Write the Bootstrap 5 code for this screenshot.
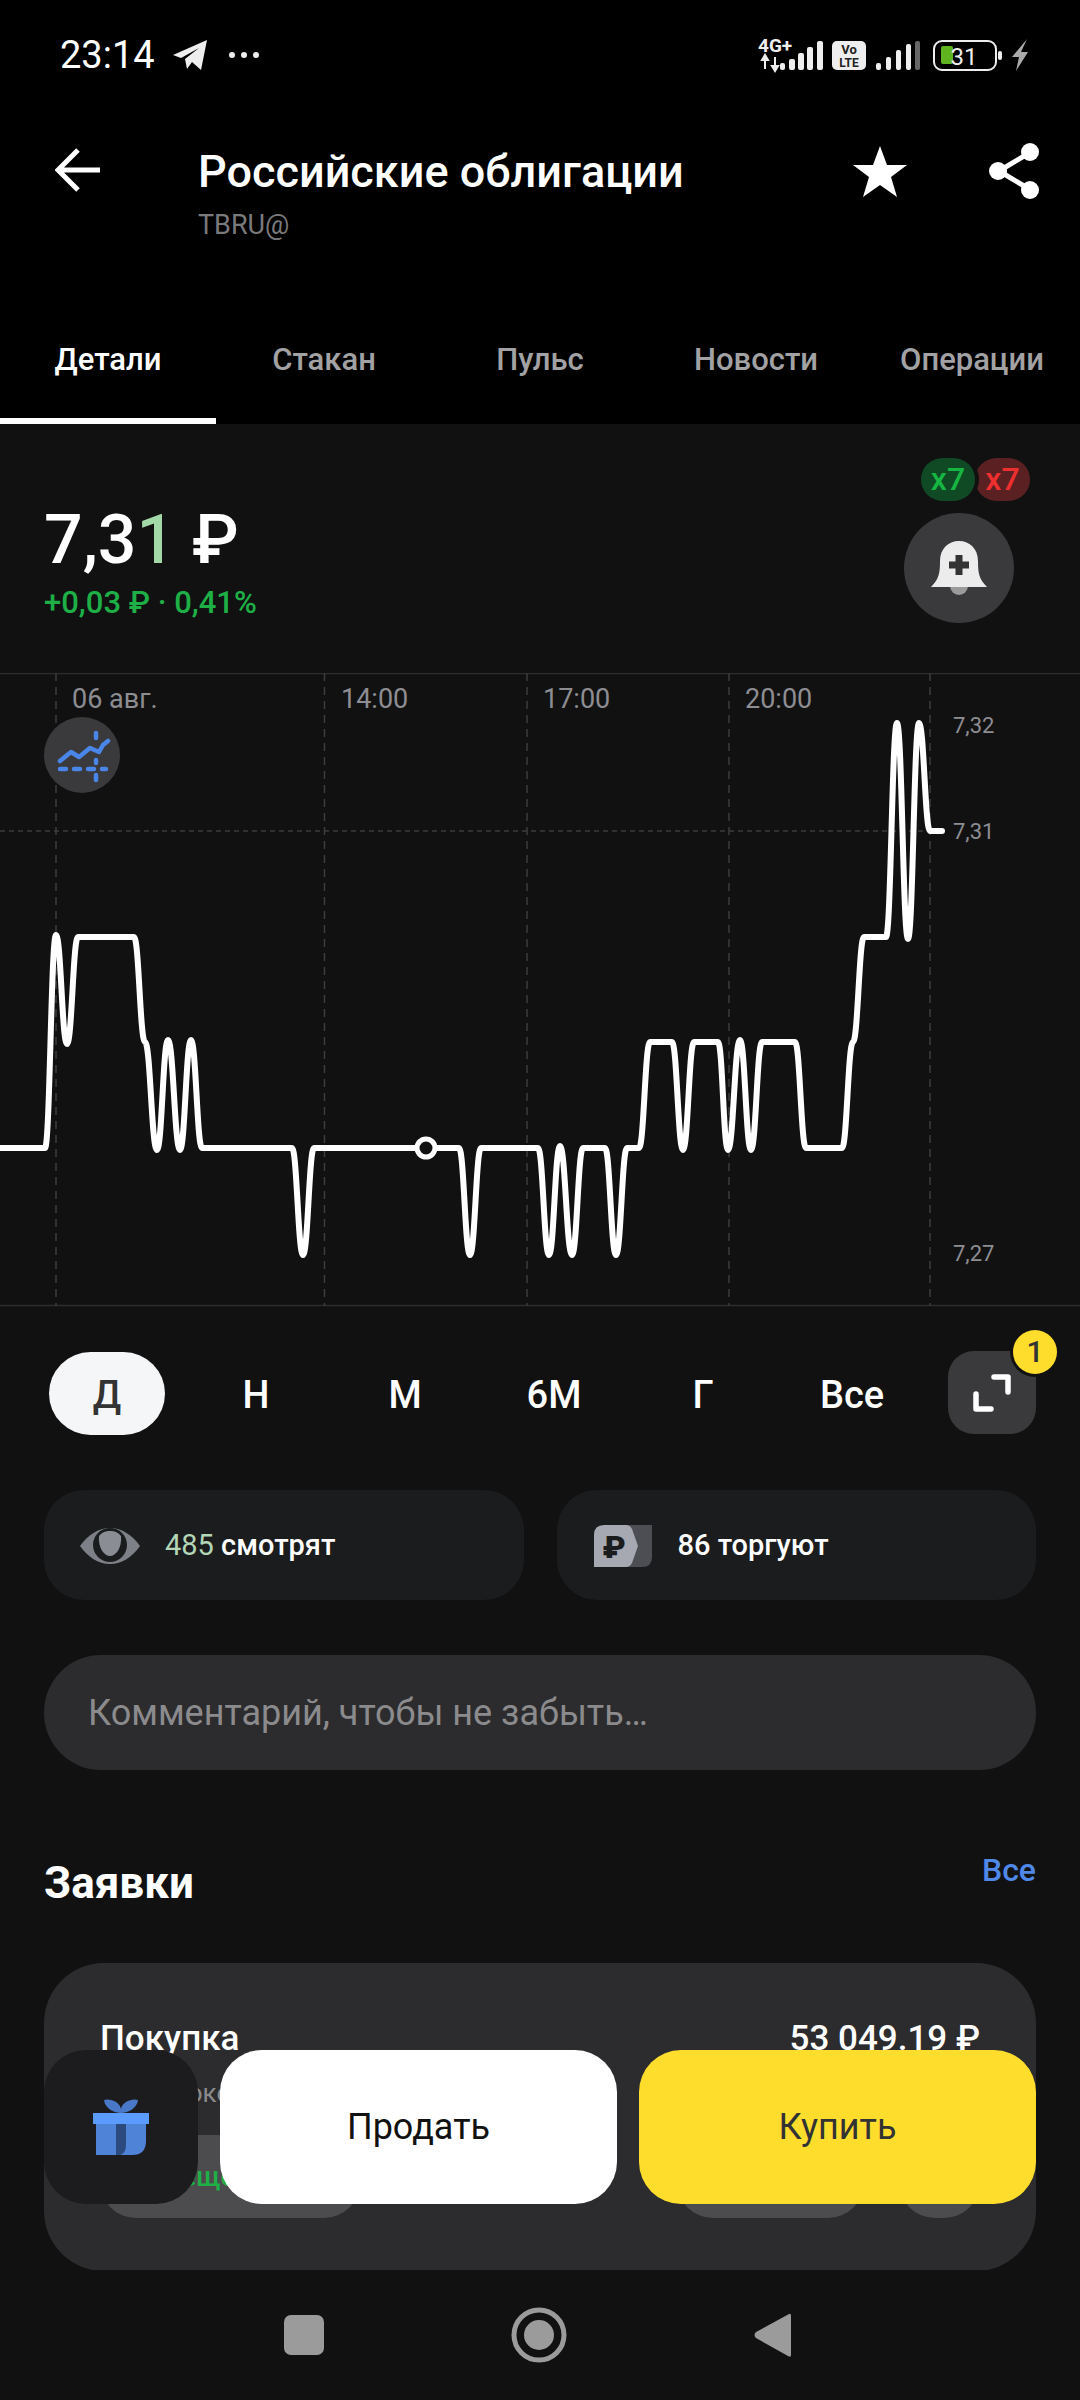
<!DOCTYPE html>
<html lang="ru">
<head>
  <meta charset="UTF-8">
  <meta name="viewport" content="width=device-width, initial-scale=1.0">
  <title>Российские облигации</title>
  <link href="https://cdn.jsdelivr.net/npm/bootstrap@5.3.0/dist/css/bootstrap.min.css" rel="stylesheet">
  <style>
    body { margin: 0; background: #111112; color: #fff; font-family: Roboto, "Noto Sans", sans-serif; }
    svg { display: block; flex-shrink: 0; }
    .screen { width: 1080px; height: 2400px; overflow: hidden; background: #111112; }

    .top-area { height: 424px; background: #000; }
    .status-bar { height: 110px; padding: 0 52px 0 60px; }
    .clock { font-size: 38px; line-height: 1; }
    .plane-icon { margin-left: 17px; }
    .dots-icon { margin-left: 20px; }
    .title-row { height: 162px; padding: 0 41px 0 55px; }
    .back-icon { margin-top: 38px; }
    .page-title { font-size: 45px; font-weight: 500; line-height: 52px; margin: 0; }
    .ticker { font-size: 27px; line-height: 34px; color: #7a7a7c; margin-top: 10px; }
    .title-text { margin-left: 97px; margin-top: 36px; }
    .title-actions { margin-top: 36px; }
    .star-icon { margin-right: 81px; }
    .share-icon { margin-top: -3px; }
    .tab-strip { height: 152px; align-items: stretch; }
    .tab-strip .nav-link { color: #a2a2a4; font-size: 31px; font-weight: 500; padding: 65px 0 0; border-bottom: 6px solid transparent; border-radius: 0; white-space: nowrap; }
    .tab-strip .nav-link.active { color: #fff; border-bottom-color: #fff; }

    .quote-area { height: 249px; padding: 0 44px; position: relative; }
    .price-now { font-size: 68px; font-weight: 500; line-height: 80px; margin-top: 76px; }
    .price-now span { color: #a3d8a8; }
    .price-diff { font-size: 31px; line-height: 36px; color: #1eb046; font-weight: 500; margin-top: 5px; }
    .lot-badge { position: absolute; top: 34px; height: 43px; padding: 0; font-size: 32px; font-weight: 500; line-height: 43px; border-radius: 22px; box-shadow: 0 0 0 4px #111112; }
    .lot-buy { left: 921px; width: 54px; background: #0f4a24; color: #17b642; z-index: 1; }
    .lot-sell { left: 975px; width: 55px; background: #5a2022; color: #ee2f2f; }
    .bell-btn { position: absolute; left: 904px; top: 89px; width: 110px; height: 110px; border-radius: 50%; background: #3a3a3c; padding: 0; border: 0; }

    .chart-box { height: 634px; }
    .axis-time { font-size: 27px; fill: #8d8d92; font-family: Roboto, sans-serif; }
    .axis-price { font-size: 22px; fill: #8d8d92; font-family: Roboto, sans-serif; }

    .range-row { padding: 45px 44px 0 49px; height: 128px; }
    .range-item { width: 116px; height: 83px; margin-right: 33px; font-size: 38px; font-weight: 500; line-height: 86px; text-align: center; color: #fff; border-radius: 42px; padding: 0; }
    .range-item.active { background: #f5f6f8; color: #333; }
    .expand-btn { position: absolute; left: 948px; top: 1351px; width: 88px; height: 83px; background: #3a3a3c; border-radius: 26px; border: 0; padding: 0; }
    .alert-dot { position: absolute; left: 1013px; top: 1330px; width: 44px; height: 44px; border-radius: 50%; background: #fedd2d; color: #333; font-size: 30px; font-weight: 500; line-height: 44px; padding: 0; box-shadow: 0 0 0 3px #111112; }

    .info-row { padding: 0 44px; margin-top: 55px; gap: 33px; }
    .info-pill { flex: 1 1 0; height: 110px; background: #1b1c1e; border: 0; border-radius: 40px; font-size: 29px; font-weight: 500; padding-top: 2px; }
    .info-pill .count { color: #b3d6b6; font-weight: 400; }
    .eye-icon { margin: 0 25px 0 36px; }
    .rub-icon { margin: 0 26px 0 37px; }

    .comment-box { margin: 55px 44px 0; width: 992px; height: 115px; background: #2c2c2e; border: 0; border-radius: 57px; color: #8b8b8d; font-size: 36px; line-height: 117px; padding: 0 44px; }

    .orders-head { padding: 0 44px; margin-top: 78px; height: 115px; }
    .orders-title { font-size: 44px; font-weight: 700; line-height: 48px; margin: 11px 0 0; }
    .orders-all { font-size: 32px; font-weight: 500; color: #4f88e6; text-decoration: none; line-height: 36px; margin-top: 4px; }
    .order-card { margin: 0 44px; width: 992px; height: 308px; background: #2c2c2e; border: 0; border-radius: 60px; padding: 56px 56px 0; color: #fff; }
    .order-line { font-size: 35px; font-weight: 500; line-height: 40px; }
    .order-note { font-size: 26px; line-height: 36px; color: #8b8b8d; margin-top: 16px; }
    .order-foot { margin-top: 24px; }
    .order-chip { height: 83px; border-radius: 36px; background: #4c4c4e; font-size: 28px; font-weight: 500; line-height: 83px; color: #1eb046; }
    .chip-status { width: 260px; padding-left: 13px; }
    .chip-middle { width: 187px; }
    .chip-small { width: 81px; margin-left: 35px; }

    .action-bar { position: absolute; left: 44px; top: 2050px; width: 992px; height: 154px; gap: 22px; }
    .gift-btn { width: 154px; height: 154px; background: #1c1c1e; border: 0; border-radius: 42px; padding: 0; }
    .deal-btn { width: 397px; height: 154px; border: 0; border-radius: 42px; font-size: 36px; color: #111; }
    .deal-sell { background: #fff; }
    .deal-buy { background: #ffdd2d; color: #333; }

    .system-nav { height: 130px; background: #111112; }
  </style>
</head>
<body>
  <div class="screen d-flex flex-column position-relative">

    <div class="top-area">
      <div class="status-bar d-flex align-items-center justify-content-between">
        <div class="d-flex align-items-center">
          <span class="clock">23:14</span>
          <svg class="plane-icon" width="36" height="30" viewBox="0 0 36 30"><path d="M1 15 35 0 29 30 20 22 15 29 13 19 27 8 9 18Z" fill="#eee"/></svg>
          <svg class="dots-icon" width="32" height="8" viewBox="0 0 32 8"><circle cx="4" cy="4" r="3" fill="#eee"/><circle cx="16" cy="4" r="3" fill="#eee"/><circle cx="28" cy="4" r="3" fill="#eee"/></svg>
        </div>
        <svg width="274" height="40" viewBox="754 34 274 40">
          <text x="758" y="51" font-family="Roboto, sans-serif" font-size="19" font-weight="700" fill="#eee">4G+</text>
          <path d="M765 56v12M762 59h6l-3-5ZM775 56v12M772 65h6l-3 5Z" stroke="#eee" stroke-width="2" fill="#eee"/>
          <g fill="#eee">
            <rect x="780" y="62" width="5" height="7" rx="2"/><rect x="789" y="58" width="6" height="11" rx="2"/><rect x="798" y="52" width="6" height="17" rx="2"/><rect x="807" y="46" width="6" height="23" rx="2"/><rect x="817" y="40" width="6" height="29" rx="2"/>
            <rect x="832" y="40" width="34" height="29" rx="5"/>
            <rect x="876" y="62" width="5" height="7" rx="2"/><rect x="886" y="56" width="5" height="13" rx="2"/><rect x="896" y="49" width="5" height="20" rx="2"/><rect x="906" y="43" width="5" height="26" rx="2"/>
          </g>
          <rect x="915" y="40" width="5" height="29" rx="2" fill="#666"/>
          <text x="849" y="53" text-anchor="middle" font-family="Roboto, sans-serif" font-size="13" font-weight="700" fill="#222">Vo</text>
          <text x="849" y="66" text-anchor="middle" font-family="Roboto, sans-serif" font-size="12" font-weight="700" fill="#222">LTE</text>
          <rect x="934" y="40" width="62" height="29" rx="8" fill="none" stroke="#eee" stroke-width="2"/>
          <rect x="941" y="45" width="12" height="18" rx="2" fill="#5fb41f"/>
          <text x="964" y="64" text-anchor="middle" font-family="Roboto, sans-serif" font-size="24" fill="#eee">31</text>
          <rect x="998" y="50" width="4" height="9" rx="2" fill="#eee"/>
          <path d="M1027 38 1012 56h7l-3 14 12-19h-7Z" fill="#aaa"/>
        </svg>
      </div>

      <div class="title-row d-flex align-items-start justify-content-between">
        <div class="d-flex align-items-start">
          <svg class="back-icon" width="46" height="44" viewBox="0 0 46 44"><path d="M23 2 3 22 23 42M3 22H45" fill="none" stroke="#fff" stroke-width="5"/></svg>
          <div class="title-text">
            <h1 class="page-title">Российские облигации</h1>
            <div class="ticker">TBRU@</div>
          </div>
        </div>
        <div class="title-actions d-flex align-items-start">
          <svg class="star-icon" width="56" height="52" viewBox="0 0 56 52"><path d="M28 0 35 19 55 19 39 31 45 51 28 39 11 51 17 31 1 19 21 19Z" fill="#fff"/></svg>
          <svg class="share-icon" width="50" height="56" viewBox="0 0 50 56"><path d="M40 10 10 28 40 46" fill="none" stroke="#fff" stroke-width="5"/><circle cx="41" cy="9" r="9" fill="#fff"/><circle cx="9" cy="28" r="9" fill="#fff"/><circle cx="41" cy="47" r="9" fill="#fff"/></svg>
        </div>
      </div>

      <nav class="nav nav-justified tab-strip">
        <a class="nav-link active" href="#">Детали</a>
        <a class="nav-link" href="#">Стакан</a>
        <a class="nav-link" href="#">Пульс</a>
        <a class="nav-link" href="#">Новости</a>
        <a class="nav-link" href="#">Операции</a>
      </nav>
    </div>

    <div class="quote-area">
      <div class="price-now">7,3<span>1</span> ₽</div>
      <div class="price-diff">+0,03 ₽ · 0,41%</div>
      <span class="badge lot-badge lot-buy">x7</span>
      <span class="badge lot-badge lot-sell">x7</span>
      <button class="btn bell-btn d-flex align-items-center justify-content-center" type="button" aria-label="Уведомление">
        <svg width="56" height="54" viewBox="0 0 56 54"><circle cx="28" cy="45" r="9" fill="#9b9b9b"/><path d="M0 46C8 38 9 32 9 20 9 8 17 0 28 0S47 8 47 20C47 32 48 38 56 46Z" fill="#ececec"/><path d="M28 14V34M18 24H38" stroke="#333" stroke-width="7"/></svg>
      </button>
    </div>

    <div class="chart-box position-relative">
      <svg width="1080" height="634" viewBox="0 673 1080 634">
        <path d="M0 673.5H1080M0 1305.5H1080" stroke="#2e2e30" stroke-width="1.5"/>
        <path d="M56 673V1306M324.5 673V1306M527 673V1306M729 673V1306M930 673V1306" stroke="#3d3d3f" stroke-width="1.5" stroke-dasharray="8 6"/>
        <path d="M0 831H930" stroke="#3d3d3f" stroke-width="1.5" stroke-dasharray="5 4"/>
        <text class="axis-time" x="72" y="708">06 авг.</text>
        <text class="axis-time" x="341" y="708">14:00</text>
        <text class="axis-time" x="543" y="708">17:00</text>
        <text class="axis-time" x="745" y="708">20:00</text>
        <text class="axis-price" x="953" y="733">7,32</text>
        <text class="axis-price" x="953" y="839">7,31</text>
        <text class="axis-price" x="953" y="1261">7,27</text>
        <path id="priceLine" fill="none" stroke="#fff" stroke-width="6" stroke-linejoin="round" stroke-linecap="round"/>
        <circle cx="426" cy="1148" r="9" fill="#111112" stroke="#fff" stroke-width="5"/>
        <circle cx="82" cy="755" r="38" fill="#3a3a3c"/>
        <path d="M60 761 71 752 79 757 90 748 99 752 103 745 108 741" fill="none" stroke="#4a86e8" stroke-width="4.5" stroke-linejoin="round" stroke-linecap="round"/>
        <path d="M60 769H66M74 769H80M88 769H94M102 769H106M96 733V738M96 760V763M96 775V780" fill="none" stroke="#4a86e8" stroke-width="4.5" stroke-linecap="round"/>
      </svg>
    </div>

    <div class="range-row d-flex">
      <a class="range-item active text-decoration-none" href="#">Д</a>
      <a class="range-item text-decoration-none" href="#">Н</a>
      <a class="range-item text-decoration-none" href="#">М</a>
      <a class="range-item text-decoration-none" href="#">6М</a>
      <a class="range-item text-decoration-none" href="#">Г</a>
      <a class="range-item text-decoration-none" href="#">Все</a>
    </div>
    <button class="btn expand-btn d-flex align-items-center justify-content-center" type="button" aria-label="Развернуть">
      <svg width="38" height="38" viewBox="0 0 38 38"><path d="M21 3H35V18M3 20V35H18" fill="none" stroke="#fff" stroke-width="5.5" stroke-linecap="round" stroke-linejoin="round"/></svg>
    </button>
    <span class="badge alert-dot">1</span>

    <div class="info-row d-flex">
      <div class="info-pill d-flex align-items-center">
        <svg class="eye-icon" width="60" height="36" viewBox="0 0 60 36"><path d="M0 18C8 7 18 0 30 0S52 7 60 18C52 29 42 36 30 36S8 29 0 18Z" fill="#7d8086"/><circle cx="30" cy="17" r="17" fill="#1b1c1e"/><path d="M19 8C22 4 26 3 30 3S38 4 41 8C42 20 36 28 30 28S18 20 19 8Z" fill="#8a8d94"/></svg>
        <span><span class="count">485</span> смотрят</span>
      </div>
      <div class="info-pill d-flex align-items-center">
        <svg class="rub-icon" width="58" height="42" viewBox="0 0 58 42"><path d="M20 0H58V32Q58 42 48 42H20Z" fill="#4c4e53"/><path d="M10 0H32Q36 0 38 4L44 21 38 38Q36 42 32 42H0V10Q0 0 10 0Z" fill="#a6a9b1"/><text x="20" y="33" text-anchor="middle" font-family="Roboto, sans-serif" font-size="32" font-weight="900" fill="#1b1c1e">₽</text></svg>
        <span>86 торгуют</span>
      </div>
    </div>

    <div class="form-control comment-box">Комментарий, чтобы не забыть…</div>

    <div class="orders-head d-flex justify-content-between align-items-start">
      <h2 class="orders-title">Заявки</h2>
      <a class="orders-all" href="#">Все</a>
    </div>

    <div class="card order-card">
      <div class="d-flex justify-content-between order-line">
        <span>Покупка</span>
        <span>53 049.19 ₽</span>
      </div>
      <div class="order-note">Мой брокерский</div>
      <div class="d-flex order-foot">
        <div class="order-chip chip-status">Размещена</div>
        <div class="order-chip chip-middle ms-auto"></div>
        <div class="order-chip chip-small"></div>
      </div>
    </div>

    <div class="action-bar d-flex">
      <button class="btn gift-btn d-flex align-items-center justify-content-center" type="button" aria-label="Подарок">
        <svg width="56" height="56" viewBox="0 0 56 56"><path d="M28 14C22 14 12 10 11 1 17-1 27 3 28 10 29 3 39-1 45 1 44 10 34 14 28 14Z" fill="#4a78c9"/><path d="M3 25H53V42Q53 56 39 56H3Z" fill="#4f83d8"/><path d="M23 25H33V46Q33 54 27 56H23Z" fill="#2d4a7e"/><rect y="14" width="56" height="11" fill="#5b9bff"/></svg>
      </button>
      <button class="btn deal-btn deal-sell" type="button">Продать</button>
      <button class="btn deal-btn deal-buy" type="button">Купить</button>
    </div>

    <div class="system-nav position-absolute bottom-0 start-0 w-100">
      <svg width="1080" height="130" viewBox="0 2270 1080 130">
        <rect x="284" y="2315" width="40" height="40" rx="7" fill="#9b9b9b"/>
        <circle cx="539" cy="2335" r="25" fill="none" stroke="#9b9b9b" stroke-width="5"/>
        <circle cx="539" cy="2335" r="15" fill="#9b9b9b"/>
        <path d="M789 2314Q791 2313 791 2316V2355Q791 2358 788 2356L756 2338Q753 2335 756 2332Z" fill="#9b9b9b"/>
      </svg>
    </div>
  </div>

  <script src="https://cdn.jsdelivr.net/npm/bootstrap@5.3.0/dist/js/bootstrap.bundle.min.js"></script>
  <script>
    // knots read off the chart: x, y
    const pts = [[0,1148],[45,1148],[56,935],[67,1044],[78,937],[134,937],[145,1042],[157,1150],[168,1040],[180,1150],[191,1040],[202,1148],
      [292,1148],[303,1255],[314,1148],[459,1148],[470,1255],[481,1148],[538,1148],[549,1255],[560,1146],[572,1255],[583,1148],[605,1148],[616,1255],[627,1148],[639,1148],
      [650,1042],[672,1042],[683,1150],[694,1042],[718,1042],[728,1150],[740,1040],[751,1150],[762,1042],[795,1042],[806,1148],[842,1148],[853,1042],[864,937],[886,937],
      [897,723],[908,939],[919,723],[930,831],[942,831]];
    let d = 'M' + pts[0].join(' ');
    for (let i = 1; i < pts.length; i++) {
      const [x0, y0] = pts[i - 1], [x1, y1] = pts[i], k = (x1 - x0) * 0.45;
      d += ` C${x0 + k} ${y0} ${x1 - k} ${y1} ${x1} ${y1}`;
    }
    document.getElementById('priceLine').setAttribute('d', d);
  </script>
</body>
</html>
